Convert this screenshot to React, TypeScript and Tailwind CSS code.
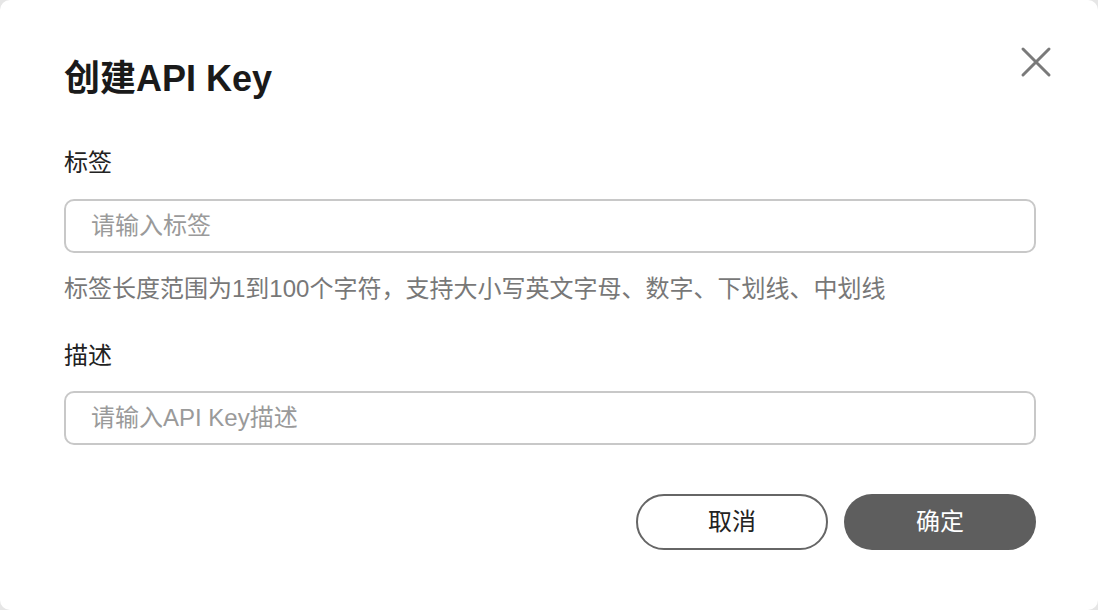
import React from 'react';

const font = { fontFamily: '"Liberation Sans", "Noto Sans CJK SC", sans-serif' };

const CloseIcon: React.FC = () => (
  <svg width="40" height="40" viewBox="0 0 40 40" fill="none">
    <path d="M7 7L33 33M33 7L7 33" stroke="#7a7a7a" strokeWidth="3" strokeLinecap="round" />
  </svg>
);

const CreateApiKeyDialog: React.FC = () => {
  return (
    <div className="relative w-[1098px] h-[610px] bg-white rounded-[10px] pl-[64px] pr-[62px] pt-[55px]" style={font}>
      {/* Close button */}
      <button className="absolute top-[42px] right-[42px] w-[40px] h-[40px] flex items-center justify-center">
        <CloseIcon />
      </button>

      <h2 className="text-[36px] leading-[48px] font-bold text-[#1a1a1a]">创建API Key</h2>

      {/* 标签 */}
      <label className="block mt-[44px] text-[24px] leading-[32px] text-[#222]">标签</label>
      <input
        className="mt-[20px] w-full h-[54px] rounded-[10px] border-2 border-[#c8c8c8] px-[25px] text-[24px] text-[#222] placeholder:text-[#9a9a9a] outline-none"
        placeholder="请输入标签"
        style={font}
      />
      <p className="mt-[20px] text-[24px] leading-[32px] text-[#787878]">
        标签长度范围为1到100个字符，支持大小写英文字母、数字、下划线、中划线
      </p>

      {/* 描述 */}
      <label className="block mt-[35px] text-[24px] leading-[32px] text-[#222]">描述</label>
      <input
        className="mt-[19px] w-full h-[54px] rounded-[10px] border-2 border-[#c8c8c8] px-[25px] text-[24px] text-[#222] placeholder:text-[#9a9a9a] outline-none"
        placeholder="请输入API Key描述"
        style={font}
      />

      {/* Actions */}
      <div className="mt-[49px] flex justify-end gap-[16px]">
        <button className="w-[192px] h-[56px] rounded-full border-2 border-[#666] bg-white text-[24px] text-[#222]">
          取消
        </button>
        <button className="w-[192px] h-[56px] rounded-full bg-[#5e5e5e] text-[24px] text-white">
          确定
        </button>
      </div>
    </div>
  );
};

export default function App() {
  return (
    <div className="w-[1098px] h-[610px] bg-[#e6e6e6] overflow-hidden">
      <CreateApiKeyDialog />
    </div>
  );
}
